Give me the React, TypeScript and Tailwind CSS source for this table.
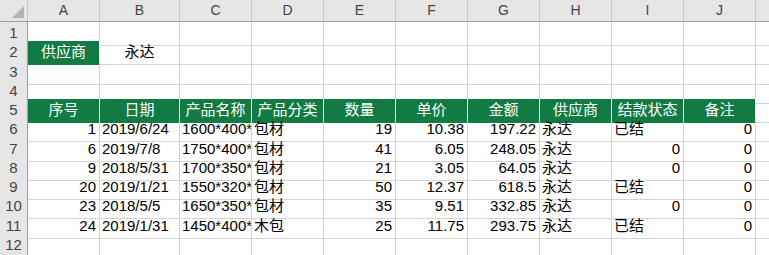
const cols = ['A', 'B', 'C', 'D', 'E', 'F', 'G', 'H', 'I', 'J'];

type Cell = { v?: string; align?: 'l' | 'r' | 'c'; head?: boolean };

const heights = [19, 20, 19, 19, 19, 20, 19, 19, 19, 20, 19, 19];

const headRow = ['序号', '日期', '产品名称', '产品分类', '数量', '单价', '金额', '供应商', '结款状态', '备注'];

const data: (string | number)[][] = [
  [1, '2019/6/24', '1600*400*', '包材', 19, 10.38, 197.22, '永达', '已结', 0],
  [6, '2019/7/8', '1750*400*', '包材', 41, 6.05, 248.05, '永达', 0, 0],
  [9, '2018/5/31', '1700*350*', '包材', 21, 3.05, 64.05, '永达', 0, 0],
  [20, '2019/1/21', '1550*320*', '包材', 50, 12.37, 618.5, '永达', '已结', 0],
  [23, '2018/5/5', '1650*350*', '包材', 35, 9.51, 332.85, '永达', 0, 0],
  [24, '2019/1/31', '1450*400*', '木包', 25, 11.75, 293.75, '永达', '已结', 0],
];

function buildRows(): Cell[][] {
  const empty = (): Cell[] => cols.map(() => ({}));
  const rows: Cell[][] = [];
  rows.push(empty());
  const r2 = empty();
  r2[0] = { v: '供应商', align: 'c', head: true };
  r2[1] = { v: '永达', align: 'c' };
  rows.push(r2);
  rows.push(empty());
  rows.push(empty());
  rows.push(headRow.map((h) => ({ v: h, align: 'c', head: true })));
  data.forEach((d) => {
    rows.push(
      d.map((x) => ({ v: String(x), align: typeof x === 'number' ? 'r' : 'l' }) as Cell),
    );
  });
  rows.push(empty());
  return rows;
}

const grid =
  'grid grid-cols-[28px_72px_80px_72px_72px_72px_72px_72px_72px_72px_72px_1fr]';

export default function App() {
  const rows = buildRows();
  return (
    <div
      className="w-[769px] h-[255px] overflow-hidden bg-white text-[15px] text-black"
      style={{ fontFamily: '"Liberation Sans", "Noto Sans CJK SC", sans-serif' }}
    >
      <div className={`${grid} h-[22px] bg-[#e6e6e6] border-b border-[#9f9f9f] text-[#444]`}>
        <div className="flex items-end justify-end pr-[3px] pb-[3px] border-r border-[#c6c6c6]">
          <svg width="12" height="12" viewBox="0 0 12 12">
            <path d="M12 0 L12 12 L0 12 Z" fill="#b4b4b4" />
          </svg>
        </div>
        {cols.map((c) => (
          <div key={c} className="flex items-center justify-center border-r border-[#c6c6c6] text-[14px]">
            {c}
          </div>
        ))}
        <div />
      </div>
      {rows.map((r, i) => (
        <div key={i} className={grid} style={{ height: heights[i] }}>
          <div className="flex items-center justify-center bg-[#e6e6e6] border-r border-b border-r-[#9f9f9f] border-b-[#d0d0d0] text-[#444]">
            {i + 1}
          </div>
          {r.map((c, j) => (
            <div
              key={j}
              className={`flex items-center overflow-hidden whitespace-nowrap border-r border-b ${
                c.head
                  ? 'bg-[#127b43] text-white border-r-white border-b-[#127b43]'
                  : 'border-[#d4d4d4]'
              } ${c.align === 'r' ? 'justify-end pr-[3px]' : c.align === 'c' ? 'justify-center' : 'justify-start pl-[2px]'}`}
            >
              {c.v}
            </div>
          ))}
          <div className="border-b border-[#d4d4d4]" />
        </div>
      ))}
    </div>
  );
}
